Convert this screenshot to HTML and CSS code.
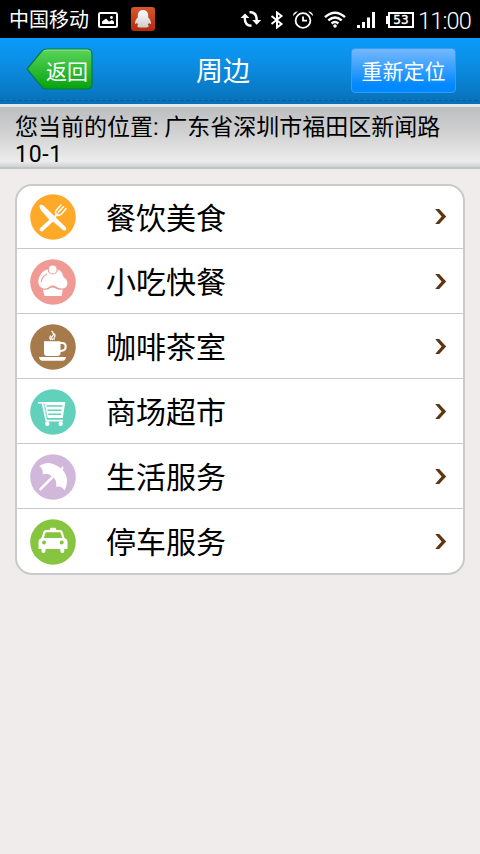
FILE: index.html
```html
<!DOCTYPE html>
<html lang="zh-CN">
<head>
<meta charset="utf-8">
<title>周边</title>
<link rel="stylesheet" href="styles.css">
</head>
<body>
<svg class="defs" aria-hidden="true">
  <symbol id="chevron" viewBox="0 0 14 18"><path d="M1.200 1H5.200L12.200 8.500 5.200 16H1.200L7.600 8.500z" fill="#5d3510"/></symbol>
</svg>
<div class="status">
  <span class="carrier">中国移动</span>
  <svg class="photo" width="20" height="16" viewBox="0 0 20 16"><rect x="1" y="1" width="18" height="14" rx="1.500" fill="none" stroke="#fff" stroke-width="2"/><path d="M4 12V9.500L6 8l2-1.500 3 3L14 8l2 1.500V12z" fill="#fff"/><circle cx="13.500" cy="5.500" r="1.400" fill="#fff"/></svg>
  <svg class="qq" width="24" height="24" viewBox="0 0 24 24"><defs><linearGradient id="qr" x2="0" y2="1"><stop stop-color="#d9572a"/><stop offset="1" stop-color="#b52a07"/></linearGradient><linearGradient id="qw" x2="0" y2="1"><stop stop-color="#fff"/><stop offset="1" stop-color="#ccc"/></linearGradient></defs><rect width="24" height="24" rx="3" fill="url(#qr)"/><path d="M12 3c-3.500 0-5.200 2.500-5.200 5.500v2C5 12 4 14.500 4 16.500c0 1 1 .5 2-.8.3 1 .7 1.800 1.300 2.400-1.500.6-1.500 2.300 1 2.300H15.700c2.500 0 2.500-1.700 1-2.300.6-.6 1-1.400 1.300-2.400 1 1.300 2 1.800 2 .8 0-2-1-4.500-2.800-6v-2C17.200 5.500 15.500 3 12 3z" fill="url(#qw)"/></svg>
  <span class="grow"></span>
  <svg class="sync" width="22" height="18" viewBox="0 0 22 18"><g fill="none" stroke="#fff" stroke-width="2.400"><path d="M11.500 15.800C7 15.800 4.800 13 4.800 8"/><path d="M9.500 2C14 2 16.700 5 16.700 10"/></g><path d="M.5 8L5 3.500 9.500 8zM12.200 10H21.200l-4.500 4.700z" fill="#fff"/></svg>
  <svg class="bt" width="14" height="18" viewBox="0 0 14 18"><path d="M1.500 5l10 8L7 16.500v-15L11.500 5l-10 8" fill="none" stroke="#fff" stroke-width="2"/></svg>
  <svg class="alarm" width="20" height="18" viewBox="0 0 20 18"><g fill="none" stroke="#fff" stroke-width="1.800"><circle cx="10" cy="9.500" r="7.400"/><path d="M10 5.500v4.200h4"/></g><path d="M0 5Q0 .5 5 .5zM15 .5q5 0 5 4.500z" fill="#fff"/></svg>
  <svg class="wifi" width="22" height="17" viewBox="0 0 22 17"><g fill="none" stroke="#fff" stroke-width="2.400"><path d="M1 6.200Q11-2.800 21 6.200M4.300 9.400Q11 3.400 17.700 9.400M7.600 12.500Q11 9.500 14.400 12.500"/></g><circle cx="11" cy="15" r="1.800" fill="#fff"/></svg>
  <svg class="signal" width="19" height="16" viewBox="0 0 19 16"><path d="M0 13h3v3H0zM5 10h3v6H5zM10 5.500h3V16h-3zM15 0h3v16h-3z" fill="#fff"/></svg>
  <div class="battery"><span>53</span></div>
  <span class="time">11:00</span>
</div>
<header class="bar">
  <div class="back"><svg width="67" height="42" viewBox="0 0 67 42"><defs><linearGradient id="bg" x2="0" y2="1"><stop stop-color="#5ad45b"/><stop offset="1" stop-color="#06a30e"/></linearGradient></defs><path d="M1 21L15 4Q17.500 1 21 1H61Q66 1 66 6V36Q66 41 61 41H21Q17.500 41 15 38Z" fill="url(#bg)" stroke="#087a49" stroke-width="1.200"/><path d="M17 3.500Q18.500 2.200 21 2.200H61Q63.500 2.200 64.500 4" fill="none" stroke="#85e486"/></svg><span>返回</span></div>
  <h1>周边</h1>
  <div class="relocate">重新定位</div>
</header>
<div class="address">您当前的位置: 广东省深圳市福田区新闻路<br><span class="number">10-1</span></div>
<main class="list">
  <div class="row">
    <svg class="icon" viewBox="0 0 46 46"><circle cx="23" cy="23" r="22.800" fill="#ffa928"/><g fill="none" stroke="#fff" stroke-linecap="round"><path d="M11.500 35.500L23 25" stroke-width="3.800"/><path d="M24.500 23l3-3" stroke-width="2"/><path d="M31 11l-5 5.500Q24.500 20 28 21.500 30 21.500 31.500 20L36 14.500M33.500 12.800L28.500 18" stroke-width="1.500"/></g><path d="M9.500 11Q12 10 14.500 12.500L36 33.500Q37.200 37 33.500 36.500L23 27.500Q21.500 28 20 26.500L11.500 17Q9 14 9.500 11z" fill="#fff"/></svg>
    <span class="label">餐饮美食</span><svg class="chev"><use href="#chevron"/></svg>
  </div>
  <div class="row">
    <svg class="icon" viewBox="0 0 46 46"><circle cx="23" cy="23" r="22.800" fill="#f09a96"/><path d="M14.500 11.500Q22.500 7.500 30 11.500 33 14 33.500 18 37.500 20.500 37.500 25 36.500 29.500 32 29.500 28 29.500 26 27.500 22.500 25.300 19 28 15 31 11 28.500 7.500 25.500 8.500 20.500 10 14.500 14.500 11.500zM13 30.500q4 1 6.500-1 3.500-2 6.500.2 3 1.500 6.800.8L31.500 37H14.500z" fill="#fff"/><circle cx="22.700" cy="10.500" r="4.500" fill="#fff" stroke="#f09a96" stroke-width="1.200"/><path d="M11.300 22.500Q12 17.500 16.700 15.200" fill="none" stroke="#f09a96" stroke-width="1.200" stroke-linecap="round"/></svg>
    <span class="label">小吃快餐</span><svg class="chev"><use href="#chevron"/></svg>
  </div>
  <div class="row">
    <svg class="icon" viewBox="0 0 46 46"><circle cx="23" cy="23" r="22.800" fill="#a77a4c"/><path d="M14 17.300H30.500V29Q30.500 32 27.500 32H17Q14 32 14 29zM9 33H36Q35.500 36.700 32.500 36.700H12.500Q9.500 36.700 9 33z" fill="#fff"/><path d="M30 19H32.500Q35.700 19 35.700 22.500T32.500 26.500L30 27.200" fill="none" stroke="#fff" stroke-width="2"/><path d="M21.500 7q3.500 3 .8 5.200-1.500 1.800.5 3.800M24 9.500q1.800 2.200.5 3.500-1 1.500-.3 3M20.500 11.500q-1.500 2.500.5 4.500" fill="none" stroke="#fff" stroke-width="1.200"/></svg>
    <span class="label">咖啡茶室</span><svg class="chev"><use href="#chevron"/></svg>
  </div>
  <div class="row">
    <svg class="icon" viewBox="0 0 46 46"><circle cx="23" cy="23" r="22.800" fill="#61d1bb"/><path d="M13 13H35.300L32.800 29H16.800z" fill="#fff"/><path d="M16.500 17H32.500M17.500 21.200H31.500M18.300 25.300H31" stroke="#61d1bb" stroke-width="1.400"/><path d="M8 13.700H12.300L16.300 31.600H33" fill="none" stroke="#fff" stroke-width="1.600"/><path d="M14.300 15L17.500 29.600" stroke="#61d1bb" stroke-width=".8"/><circle cx="17.300" cy="34.800" r="2.200" fill="#fff"/><circle cx="30.700" cy="34.800" r="2.200" fill="#fff"/></svg>
    <span class="label">商场超市</span><svg class="chev"><use href="#chevron"/></svg>
  </div>
  <div class="row">
    <svg class="icon" viewBox="0 0 46 46"><circle cx="23" cy="23" r="22.800" fill="#d1b7d9"/><path d="M9.200 12Q16 7.500 23 10 28 11.500 31 14.500L32.300 12.200Q34 12.700 33.500 14L32.500 16Q37 20.500 37 27 37 32 34.500 36.500 32.500 32 26 32.700 27.500 26.500 22.500 22.700 18 18.300 12.700 20.500 13.500 14.500 9.200 12z" fill="#fff"/><path d="M22 23.700L10.500 35.200" stroke="#fff" stroke-width="2.500" stroke-linecap="round"/></svg>
    <span class="label">生活服务</span><svg class="chev"><use href="#chevron"/></svg>
  </div>
  <div class="row">
    <svg class="icon" viewBox="0 0 46 46"><circle cx="23" cy="23" r="22.800" fill="#87c540"/><path d="M19.500 11L20.500 8.700H25.500L26.500 11H30Q32 11 32.700 13L34.500 19Q37.500 20 37.500 23V30H34.300V32Q34.300 34 32.300 34T30.300 32V30H15.500V32Q15.500 34 13.500 34T11.500 32V30H8.500V23Q8.500 20 11.500 19L13.300 13Q14 11 16 11z" fill="#fff"/><path d="M16.500 13.300H29.700Q30.500 13.300 30.800 14.200L32.300 19H13.800L15.300 14.200Q15.600 13.300 16.500 13.300z" fill="#87c540"/><circle cx="14" cy="23.400" r="2" fill="#87c540"/><circle cx="31.700" cy="23.400" r="2" fill="#87c540"/></svg>
    <span class="label">停车服务</span><svg class="chev"><use href="#chevron"/></svg>
  </div>
</main>
</body>
</html>
```
FILE: styles.css
```css
* { box-sizing: border-box; }
body {
  margin: 0;
  width: 480px;
  height: 854px;
  overflow: hidden;
  background: #f0eceb;
  color: #000;
  font-family: Roboto, "Noto Sans CJK SC", sans-serif;
}
svg { display: block; flex: none; }
.defs { width: 0; height: 0; position: absolute; }
.status {
  display: flex;
  align-items: center;
  height: 38px;
  padding: 0 9px;
  background: #000;
  color: #fff;
  white-space: nowrap;
}
.carrier { width: 80px; margin-top: 2px; font-size: 20px; line-height: 36px; }
.photo { margin: 2px 0 0 9px; }
.qq { margin-left: 13px; }
.grow { flex: 1; }
.bt { margin: 1px 0 0 8px; }
.alarm { margin: 1px 0 0 9px; }
.wifi { margin-left: 11px; }
.signal { margin: 2px 0 0 11px; }
.battery {
  position: relative;
  width: 26px;
  height: 16px;
  margin: 2px 0 0 12px;
  border: 2px solid #fff;
  font: 12px/12px "DejaVu Sans", sans-serif;
  -webkit-text-stroke: 0.4px #fff;
  text-align: center;
}
.battery span { display: block; margin: 0 -2px; }
.battery::before {
  content: "";
  position: absolute;
  left: -4px;
  top: 2px;
  width: 2px;
  height: 8px;
  background: #fff;
}
.time { width: 54px; margin: 4px -1px 0 4px; font-size: 23.500px; line-height: 34px; font-weight: 300; letter-spacing: -0.8px; }
.bar {
  display: grid;
  grid-template-columns: 130px 1fr 130px;
  height: 66px;
  background:
    repeating-linear-gradient(90deg, #075e9d 0 4px, #0874ba 4px 6px) 0 62px / 100% 1px no-repeat,
    linear-gradient(#0b9cfb, #0b89dc 50%, #0870b7);
  color: #fff;
}
.back { position: relative; margin: 10px 0 0 26px; width: 67px; height: 42px; }
.back span { position: absolute; left: 20px; top: 9px; font-size: 21px; line-height: 30px; white-space: nowrap; }
h1 { margin: 14px 0 0 66px; font-size: 27px; line-height: 40px; font-weight: 400; }
.relocate {
  width: 105px;
  height: 45px;
  margin: 10px 0 0 1px;
  border: 1px solid #359cff;
  border-radius: 4px;
  background: linear-gradient(#75b9ff, #0088ff 85%);
  font-size: 21px;
  line-height: 47px;
  text-align: center;
  white-space: nowrap;
}
.address {
  height: 65px;
  padding: 7px 15px 0;
  border-top: 3px solid #e7e8eb;
  border-bottom: 2px solid #c2c3c5;
  background: linear-gradient(#bdbec0, #d2d2d3 45%, #ececed 90%, #d0d1d3);
  font-size: 23px;
  line-height: 27px;
  white-space: nowrap;
}
.number { letter-spacing: 0.7px; }
.list {
  width: 450px;
  height: 391px;
  margin: 15px 0 0 15px;
  border: 2px solid #cacaca;
  border-radius: 17px;
  background: #fff;
}
.row { display: flex; align-items: center; height: 65px; padding: 1px 15px 0 13px; border-bottom: 1px solid #c8c8ca; }
.row:first-child { height: 63px; padding-top: 0; }
.row:last-child { padding-top: 0; border-bottom: 0; }
.icon { width: 46px; height: 46px; }
.label { flex: 1; margin: 3px 0 0 30px; font-size: 30px; line-height: 44px; }
.chev { width: 14px; height: 18px; }
```
